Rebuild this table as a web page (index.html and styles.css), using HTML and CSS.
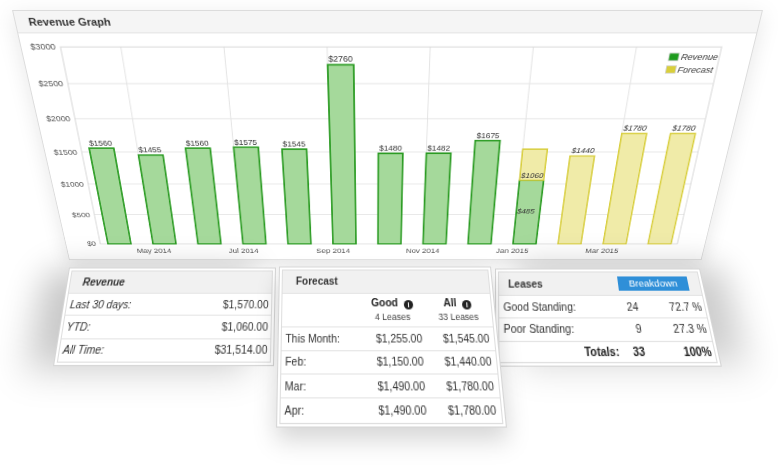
FILE: index.html
```html
<!DOCTYPE html>
<html lang="en">
<head>
<meta charset="utf-8">
<title>Revenue dashboard</title>
<link rel="stylesheet" href="styles.css">
</head>
<body>
<div class="stage">
  <section class="panel warp" data-quad="12,9.5,763,9.5,701.5,259.5,69,259.5">
    <header class="panel-head"><h2 class="panel-title">Revenue Graph</h2></header>
    <svg class="plot" width="749" height="275.5" viewBox="1 23.5 749 275.5">
      <g class="grid">
        <line x1="41" y1="77.55" x2="718" y2="77.55"/>
        <line x1="41" y1="117.4" x2="718" y2="117.4"/>
        <line x1="41" y1="157.25" x2="718" y2="157.25"/>
        <line x1="41" y1="197.1" x2="718" y2="197.1"/>
        <line x1="41" y1="236.95" x2="718" y2="236.95"/>
        <line x1="102.8" y1="37.7" x2="102.8" y2="276.8"/>
        <line x1="208.4" y1="37.7" x2="208.4" y2="276.8"/>
        <line x1="314" y1="37.7" x2="314" y2="276.8"/>
        <line x1="419.6" y1="37.7" x2="419.6" y2="276.8"/>
        <line x1="525.2" y1="37.7" x2="525.2" y2="276.8"/>
        <line x1="630.8" y1="37.7" x2="630.8" y2="276.8"/>
      </g>
      <rect class="frame" x="41" y="37.7" width="677" height="239.1"/>

      <g class="ylab">
        <text x="36" y="40.9">$3000</text>
        <text x="36" y="80.75">$2500</text>
        <text x="36" y="120.6">$2000</text>
        <text x="36" y="160.45">$1500</text>
        <text x="36" y="200.3">$1000</text>
        <text x="36" y="240.15">$500</text>
        <text x="36" y="280">$0</text>
      </g>
      <g class="xlab">
        <text x="102.8" y="290">May 2014</text>
        <text x="208.4" y="290">Jul 2014</text>
        <text x="314" y="290">Sep 2014</text>
        <text x="419.6" y="290">Nov 2014</text>
        <text x="525.2" y="290">Jan 2015</text>
        <text x="630.8" y="290">Mar 2015</text>
      </g>

      <g class="bar-rev">
        <rect x="50" y="152.47" width="27" height="124.33"/>
        <rect x="102.8" y="160.84" width="27" height="115.96"/>
        <rect x="155.6" y="152.47" width="27" height="124.33"/>
        <rect x="208.4" y="151.27" width="27" height="125.53"/>
        <rect x="261.2" y="153.66" width="27" height="123.14"/>
        <rect x="314" y="56.83" width="27" height="219.97"/>
        <rect x="366.8" y="158.84" width="27" height="117.96"/>
        <rect x="419.6" y="158.68" width="27" height="118.12"/>
        <rect x="472.4" y="143.3" width="27" height="133.5"/>
        <rect x="525.2" y="192.32" width="27" height="84.48"/>
      </g>
      <g class="bar-fc">
        <rect x="525.2" y="153.66" width="27" height="38.66"/>
        <rect x="578" y="162.03" width="27" height="114.77"/>
        <rect x="630.8" y="134.93" width="27" height="141.87"/>
        <rect x="683.6" y="134.93" width="27" height="141.87"/>
      </g>

      <g class="val">
        <text x="63.5" y="149.5">$1560</text>
        <text x="116.3" y="157.8">$1455</text>
        <text x="169.1" y="149.5">$1560</text>
        <text x="221.9" y="148.3">$1575</text>
        <text x="274.7" y="150.7">$1545</text>
        <text x="327.5" y="53.8">$2760</text>
        <text x="380.3" y="155.8">$1480</text>
        <text x="433.1" y="155.7">$1482</text>
        <text x="485.9" y="140.3">$1675</text>
        <text class="val-fc" x="538.7" y="189.6">$1060</text>
        <text class="val-fc" x="536" y="236">$485</text>
        <text class="val-fc" x="591.5" y="159">$1440</text>
        <text class="val-fc" x="644.3" y="131.9">$1780</text>
        <text class="val-fc" x="697.1" y="131.9">$1780</text>
      </g>

      <g class="legend">
        <rect class="sw-rev" x="666" y="44.4" width="10" height="8"/>
        <text class="legend-text" x="678.5" y="51.8">Revenue</text>
        <rect class="sw-fc" x="665.5" y="57.9" width="10" height="8"/>
        <text class="legend-text" x="677.5" y="65.3">Forecast</text>
      </g>
    </svg>
  </section>

  <div class="cards">
    <section class="card card-revenue warp" data-quad="69,267,276,267,274,365.5,53,365.5">
      <div class="tbl">
        <div class="th rev-head">Revenue</div>
        <div class="row"><span class="rev-lbl">Last 30 days:</span><span class="rev-amt">$1,570.00</span></div>
        <div class="row"><span class="rev-lbl">YTD:</span><span class="rev-amt">$1,060.00</span></div>
        <div class="row"><span class="rev-lbl">All Time:</span><span class="rev-amt">$31,514.00</span></div>
      </div>
    </section>

    <section class="card card-forecast warp" data-quad="279,266,491,266,507,427,276,427">
      <div class="tbl">
        <div class="th fc-head">Forecast</div>
        <div class="row sub">
          <span class="c-lbl"></span>
          <span class="c-good"><span class="colhead">Good <span class="info">i</span></span><span class="colnote">4 Leases</span></span>
          <span class="c-all"><span class="colhead">All <span class="info">i</span></span><span class="colnote">33 Leases</span></span>
        </div>
        <div class="row"><span class="c-lbl">This Month:</span><span class="c-good">$1,255.00</span><span class="c-all">$1,545.00</span></div>
        <div class="row"><span class="c-lbl">Feb:</span><span class="c-good">$1,150.00</span><span class="c-all">$1,440.00</span></div>
        <div class="row"><span class="c-lbl">Mar:</span><span class="c-good">$1,490.00</span><span class="c-all">$1,780.00</span></div>
        <div class="row"><span class="c-lbl">Apr:</span><span class="c-good">$1,490.00</span><span class="c-all">$1,780.00</span></div>
      </div>
    </section>

    <section class="card card-leases warp" data-quad="495,268,700,268,722,366.5,495,366.5">
      <div class="tbl">
        <div class="th ls-head"><span>Leases</span><span class="btn">Breakdown</span></div>
        <div class="row"><span class="l-lbl">Good Standing:</span><span class="l-num">24</span><span class="l-pct">72.7 %</span></div>
        <div class="row"><span class="l-lbl">Poor Standing:</span><span class="l-num">9</span><span class="l-pct">27.3 %</span></div>
        <div class="row row-total"><span class="l-lbl">Totals:</span><span class="l-num">33</span><span class="l-pct">100%</span></div>
      </div>
    </section>
  </div>
</div>
<script src="script.js"></script>
</body>
</html>
```
FILE: styles.css
```css
* { box-sizing: border-box; }
html, body { margin: 0; padding: 0; background: #fff; }
body {
  width: 778px;
  height: 465px;
  overflow: hidden;
  font-family: "Liberation Sans", Arial, sans-serif;
  color: #333;
}
.stage { padding: 9.5px 0 0 12px; }
.warp { transform-origin: 0 0; }

/* chart panel */
.panel {
  width: 751px;
  height: 300px;
  border: 1px solid #dcdcdc;
  background: #fff;
  box-shadow: 0 6px 22px rgba(0, 0, 0, 0.10);
}
.panel-head {
  height: 22.5px;
  background: #f5f5f5;
  border-bottom: 1px solid #e2e2e2;
  display: flex;
  align-items: center;
  padding-left: 13px;
}
.panel-title { margin: 0; font-size: 11.2px; font-weight: bold; color: #333; }
.plot { display: block; }
.grid line { stroke: #e3e3e3; stroke-width: 1; }
.frame { fill: none; stroke: #d6d6d6; stroke-width: 1; }
.ylab text { font-size: 9.3px; fill: #555; text-anchor: end; }
.xlab text { font-size: 9.3px; fill: #555; text-anchor: middle; }
.bar-rev rect { fill: #a5d99b; stroke: #2a9b22; stroke-width: 1.8; }
.bar-fc rect { fill: #f0eba8; stroke: #d8ce3c; stroke-width: 1.6; }
.val text { font-size: 9px; fill: #333; text-anchor: middle; }
.val .val-fc { font-style: italic; }
.legend-text { font-size: 9.5px; font-style: italic; fill: #333; }
.sw-rev { fill: #1e9b1e; stroke: #cfcfcf; stroke-width: 0.8; }
.sw-fc { fill: #d9cf3b; stroke: #cfcfcf; stroke-width: 0.8; }

/* cards */
.cards {
  display: flex;
  align-items: flex-start;
  margin-top: -43px;
  padding-left: 49px;
}
.card {
  background: #fff;
  border: 1px solid #d6d6d6;
  padding: 2px;
  font-size: 10px;
  color: #333;
}
.tbl { border: 1px solid #dedede; }
.th {
  display: flex;
  align-items: center;
  background: #f1f1f1;
  font-weight: bold;
  color: #333;
}
.row {
  display: flex;
  align-items: center;
  border-top: 1px solid #e4e4e4;
}

.card-revenue { width: 207px; box-shadow: -24px 2px 34px rgba(0, 0, 0, 0.22); }
.rev-head { height: 21px; padding-left: 12px; font-style: italic; }
.card-revenue .row { height: 21.3px; }
.rev-lbl { flex: 1; padding-left: 3px; font-style: italic; }
.rev-amt { padding-right: 2.5px; }

.card-forecast {
  width: 212px;
  margin-left: 10px;
  margin-top: -1px;
  position: relative;
  z-index: 2;
  box-shadow: 0 10px 20px rgba(0, 0, 0, 0.17);
}
.fc-head { height: 21.5px; padding-left: 13px; }
.card-forecast .row { height: 21.4px; }
.card-forecast .row.sub { height: 32.8px; }
.c-lbl { width: 76px; padding-left: 3.5px; white-space: nowrap; }
.c-good { width: 63px; text-align: right; padding-right: 4px; }
.c-all { width: 65px; text-align: right; padding-right: 4.5px; }
.sub .c-good, .sub .c-all { text-align: center; padding-right: 0; }
.colhead { display: block; font-weight: bold; font-size: 10px; line-height: 12px; color: #222; }
.colnote { display: block; font-size: 8.5px; line-height: 11px; margin-top: 2px; color: #444; }
.info {
  display: inline-block;
  width: 9px;
  height: 9px;
  margin-left: 3px;
  border-radius: 50%;
  background: #222;
  color: #fff;
  font-size: 7px;
  line-height: 9px;
  font-weight: bold;
  text-align: center;
  vertical-align: -1px;
}

.card-leases {
  width: 205px;
  margin-left: 5px;
  margin-top: 1px;
  position: relative;
  z-index: 1;
  box-shadow: 24px -4px 34px rgba(0, 0, 0, 0.2);
}
.ls-head {
  height: 22.4px;
  justify-content: space-between;
  padding-left: 9px;
  padding-right: 11.3px;
}
.btn {
  width: 68.3px;
  height: 14.6px;
  background: #2f8fd8;
  color: #fff;
  font-size: 9.5px;
  line-height: 14.6px;
  font-weight: normal;
  text-align: center;
}
.card-leases .row { height: 20.7px; }
.card-leases .row-total { height: 18.4px; font-weight: bold; color: #222; }
.l-lbl { width: 114px; padding-left: 4px; white-space: nowrap; }
.l-num { width: 23px; text-align: right; padding-right: 3.5px; }
.l-pct { width: 60px; text-align: right; padding-right: 2.5px; }
.row-total .l-lbl { text-align: right; padding-right: 4px; }
```
FILE: script.js
```js
(function () {
  // Homography mapping the element's own rectangle onto a quadrilateral
  // (TL, TR, BR, BL) given in page coordinates, as a CSS matrix3d.
  function quadMatrix(w, h, q) {
    var x0 = q[0], y0 = q[1], x1 = q[2], y1 = q[3];
    var x2 = q[4], y2 = q[5], x3 = q[6], y3 = q[7];
    var dx1 = x1 - x2, dx2 = x3 - x2, dx3 = x0 - x1 + x2 - x3;
    var dy1 = y1 - y2, dy2 = y3 - y2, dy3 = y0 - y1 + y2 - y3;
    var den = dx1 * dy2 - dx2 * dy1;
    var g = (dx3 * dy2 - dx2 * dy3) / den;
    var k = (dx1 * dy3 - dx3 * dy1) / den;
    var a = x1 - x0 + g * x1, b = x3 - x0 + k * x3, c = x0;
    var d = y1 - y0 + g * y1, e = y3 - y0 + k * y3, f = y0;
    var m = [a / w, d / w, 0, g / w,
             b / h, e / h, 0, k / h,
             0, 0, 1, 0,
             c, f, 0, 1];
    return 'matrix3d(' + m.map(function (v) { return +v.toFixed(8); }).join(',') + ')';
  }

  var els = document.querySelectorAll('[data-quad]');
  Array.prototype.forEach.call(els, function (el) {
    var q = el.getAttribute('data-quad').split(',').map(Number);
    var r = el.getBoundingClientRect();
    var ox = r.left + window.scrollX, oy = r.top + window.scrollY;
    var rel = q.map(function (v, i) { return i % 2 ? v - oy : v - ox; });
    el.style.transform = quadMatrix(r.width, r.height, rel);
  });
})();
```
